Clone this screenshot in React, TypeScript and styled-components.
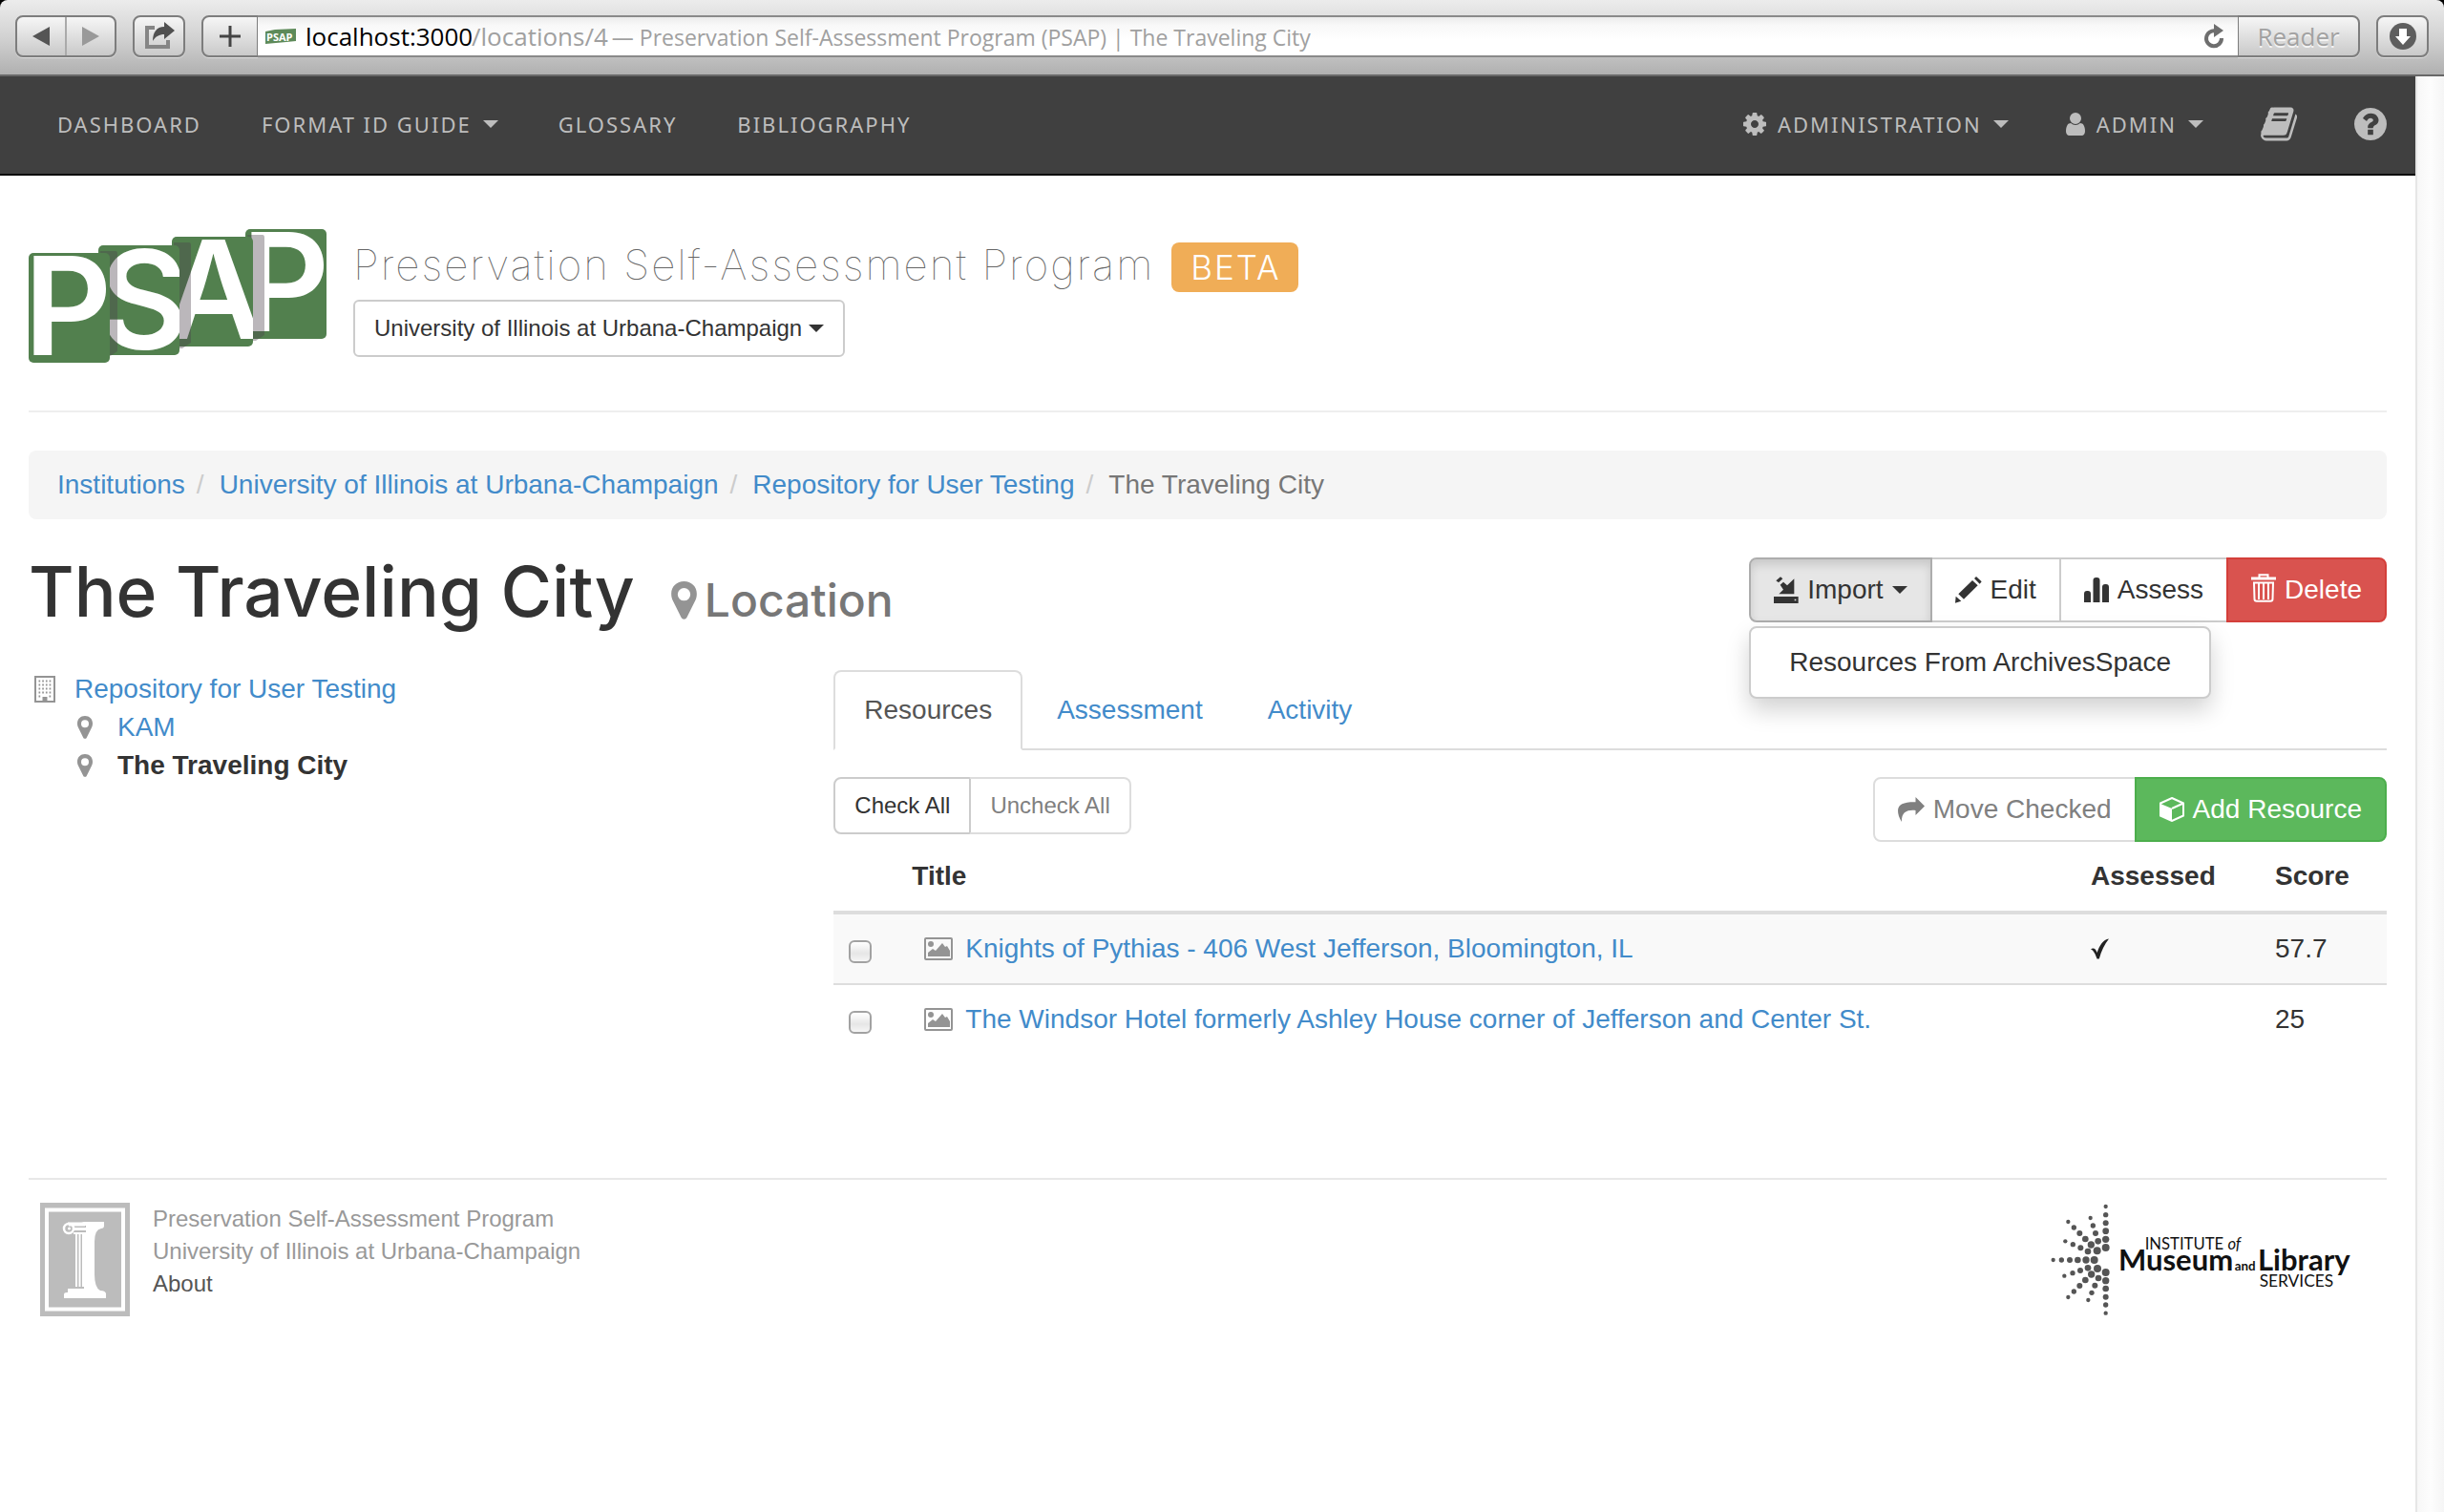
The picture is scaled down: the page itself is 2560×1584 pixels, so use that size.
import React from "react";
import styled, { createGlobalStyle, css } from "styled-components";

const sans = `"Liberation Sans", Arial, Helvetica, sans-serif`;
const display = `Inter, "Open Sans", sans-serif`;
const humanist = `"Open Sans", "Noto Sans", sans-serif`;

const c = {
  link: "#428bca",
  text: "#333",
  muted: "#777",
  icon: "#949494",
  line: "#ddd",
  faint: "#eee",
};

const GlobalStyle = createGlobalStyle`
  *, *::before, *::after { box-sizing: border-box; }
  body { margin: 0; background: #fff; color: ${c.text}; font: 28px/40px ${sans}; }
  button, input, select { font: inherit; color: inherit; margin: 0; }
  a { color: ${c.link}; text-decoration: none; }
  svg { display: block; flex: none; }
`;

const Window = styled.div`
  display: flex;
  flex-direction: column;
  min-height: 100vh;
`;

/* ---------- browser toolbar ---------- */

const ToolbarFrame = styled.div`
  background: #000;
`;

const Toolbar = styled.div`
  display: flex;
  align-items: flex-start;
  height: 80px;
  padding: 16px 16px 0;
  border-bottom: 2px solid #686868;
  border-radius: 8px 8px 0 0;
  background: linear-gradient(#ececec, #d2d2d2 50%, #b0b0b0);
`;

const toolSurface = css`
  height: 44px;
  border: 2px solid #7d7d7d;
  background: linear-gradient(#f6f6f6, #c9c9c9);
  box-shadow: 0 1px 0 #ddd;
`;

const HistoryGroup = styled.div`
  ${toolSurface}
  display: flex;
  width: 106px;
  border-radius: 8px;
`;

const HistoryButton = styled.button<{ $divided?: boolean }>`
  display: flex;
  flex: 1;
  align-items: center;
  justify-content: center;
  padding: 0;
  border: 0;
  border-left: ${(p) => (p.$divided ? "2px solid #aaa" : "0")};
  background: none;
`;

const ToolButton = styled.button`
  ${toolSurface}
  display: flex;
  align-items: center;
  justify-content: center;
  width: 55px;
  padding: 0;
  border-radius: 8px;
  margin-left: 17px;
`;

const AddressBar = styled.div`
  display: flex;
  flex: 1;
  min-width: 0;
  margin-left: 17px;
`;

const AddButton = styled(ToolButton)`
  width: 59px;
  margin: 0;
  border-radius: 8px 0 0 8px;
  border-right-width: 1px;
`;

const AddressField = styled.label`
  display: flex;
  flex: 1;
  min-width: 0;
  align-items: center;
  gap: 10px;
  height: 44px;
  padding: 0 14px 0 8px;
  border: solid #8a8a8a;
  border-width: 2px 0;
  background: linear-gradient(#ececec, #f8f8f8 20%, #fff 60%);
`;

const AddressText = styled.span`
  display: flex;
  flex: 1;
  align-items: baseline;
  min-width: 0;
  white-space: pre;
  font: 26px/36px ${humanist};
  color: #a0a0a0;
`;

const AddressInput = styled.input`
  width: 174px;
  padding: 0;
  border: 0;
  outline: 0;
  background: none;
  color: #000;
`;

const PageTitle = styled.span`
  margin-left: 4px;
  font-size: 23px;
`;

const ReaderButton = styled(ToolButton)`
  width: 128px;
  margin: 0;
  border-left-width: 1px;
  border-radius: 0 8px 8px 0;
  color: #a2a2a2;
  font: 26px/36px ${humanist};
  text-shadow: 0 2px 0 #f4f4f4;
`;

/* ---------- page frame ---------- */

const Viewport = styled.div`
  display: grid;
  grid-template-columns: minmax(0, 1fr) 30px;
  flex: 1;
`;

const ScrollTrack = styled.div`
  border-left: 2px solid #e6e6e6;
  background: linear-gradient(90deg, #f7f7f7, #fdfdfd 50%, #f5f5f5);
`;

const Nav = styled.nav`
  display: flex;
  justify-content: space-between;
  height: 104px;
  padding: 0 0 0 30px;
  border-bottom: 2px solid #080808;
  background: #404040;
`;

const NavList = styled.ul<{ $gap?: number }>`
  display: flex;
  gap: ${(p) => p.$gap ?? 0}px;
  margin: 0;
  padding: 0;
  list-style: none;
`;

const NavLink = styled.a`
  display: flex;
  align-items: center;
  gap: 12px;
  height: 100px;
  padding: 0 30px;
  color: #bdbdbd;
  font: 22px/40px "Noto Sans", "Open Sans", sans-serif;
  letter-spacing: 2px;
  text-transform: uppercase;
`;

const Content = styled.div`
  padding: 0 30px;
`;

const Masthead = styled.header`
  display: flex;
  align-items: flex-end;
  gap: 28px;
  padding: 56px 0 50px;
  border-bottom: 2px solid ${c.faint};
`;

const MastheadText = styled.div`
  display: flex;
  flex-direction: column;
  align-items: flex-start;
  gap: 8px;
  padding-bottom: 6px;
`;

const ProgramName = styled.div`
  display: flex;
  align-items: baseline;
  gap: 18px;
  font: 100 44px/52px ${display};
  letter-spacing: 2px;
  color: #666;
`;

const Beta = styled.span`
  padding: 0 18px 0 20px;
  border-radius: 8px;
  background: #f0ad57;
  color: #fff;
  font: 300 35px/52px ${display};
  letter-spacing: 2px;
`;

const InstitutionPicker = styled.label`
  display: flex;
  align-items: center;
  gap: 6px;
  height: 60px;
  padding: 0 20px;
  border: 2px solid #ccc;
  border-radius: 6px;
`;

const InstitutionSelect = styled.select`
  appearance: none;
  padding: 0;
  border: 0;
  background: none;
  font-size: 24px;
  line-height: 36px;
`;

const Breadcrumb = styled.ol`
  display: flex;
  margin: 40px 0 0;
  padding: 16px 30px;
  border-radius: 8px;
  background: #f5f5f5;
  color: ${c.muted};
  list-style: none;
`;

const Crumb = styled.li`
  & + &::before {
    content: "/";
    padding: 0 16px 0 12px;
    color: #ccc;
  }
`;

const TitleRow = styled.div`
  display: flex;
  align-items: flex-start;
  justify-content: space-between;
  height: 118px;
  margin-top: 40px;
`;

const Title = styled.h1`
  display: flex;
  align-items: baseline;
  gap: 38px;
  margin: 0;
  font: 500 73px/72px ${display};
`;

const Kind = styled.small`
  display: flex;
  align-items: baseline;
  gap: 8px;
  color: ${c.muted};
  font-size: 48px;
`;

const KindPin = styled.span`
  align-self: center;
`;

/* ---------- buttons ---------- */

const ButtonGroup = styled.div`
  display: flex;
`;

type Tone = "default" | "danger" | "success";

const tones = {
  default: css`
    border-color: #ccc;
    background: #fff;
    color: ${c.text};
  `,
  danger: css`
    border-color: #d43f3a;
    background: #d9534f;
    color: #fff;
  `,
  success: css`
    border-color: #4cae4c;
    background: #5cb85c;
    color: #fff;
  `,
};

const Button = styled.button<{ $tone?: Tone; $active?: boolean; $small?: boolean }>`
  display: flex;
  align-items: center;
  gap: 9px;
  padding: ${(p) => (p.$small ? "10px 20px" : "12px 24px")};
  border: 2px solid;
  border-radius: 0;
  font-size: ${(p) => (p.$small ? "24px" : "28px")};
  line-height: ${(p) => (p.$small ? "36px" : "40px")};
  white-space: nowrap;
  ${(p) => tones[p.$tone ?? "default"]}
  ${(p) =>
    p.$active &&
    css`
      position: relative;
      z-index: 1;
      border-color: #adadad;
      background: #e6e6e6;
      box-shadow: inset 0 6px 10px rgba(0, 0, 0, 0.125);
    `}
  &:disabled {
    border-color: ${c.line};
    color: #808080;
  }
  & + & {
    margin-left: ${(p) => (p.$small ? "-1px" : "-2px")};
  }
  & + &:disabled {
    border-left-color: #ccc;
  }
  &:first-child {
    border-radius: 8px 0 0 8px;
  }
  &:last-child {
    border-radius: 0 8px 8px 0;
  }
`;

const ActionArea = styled.div`
  position: relative;
`;

const Menu = styled.ul`
  position: absolute;
  top: 100%;
  left: 0;
  z-index: 10;
  margin: 4px 0 0;
  padding: 10px 0;
  border: 2px solid #ccc;
  border-radius: 8px;
  background: #fff;
  box-shadow: 0 12px 24px rgba(0, 0, 0, 0.175);
  list-style: none;
`;

const MenuLink = styled.a`
  display: block;
  padding: 6px 40px;
  color: ${c.text};
  white-space: nowrap;
`;

/* ---------- body columns ---------- */

const Columns = styled.div`
  display: grid;
  grid-template-columns: minmax(0, 1fr) minmax(0, 2fr);
  margin: 0 -30px;
`;

const Column = styled.section`
  padding: 0 30px;
`;

const Tree = styled.ul<{ $nested?: boolean }>`
  margin: 0;
  padding: 0 0 0 ${(p) => (p.$nested ? "45px" : "6px")};
  list-style: none;
`;

const TreeLabel = styled.div<{ $current?: boolean }>`
  display: grid;
  grid-template-columns: 24px auto;
  gap: 18px;
  align-items: center;
  justify-content: start;
  font-weight: ${(p) => (p.$current ? "bold" : "normal")};
`;

const Tabs = styled.div`
  display: flex;
  gap: 4px;
  border-bottom: 2px solid ${c.line};
`;

const Tab = styled.button<{ $active?: boolean }>`
  margin-bottom: -2px;
  padding: 20px 30px;
  border: 2px solid ${(p) => (p.$active ? c.line : "transparent")};
  border-bottom-color: ${(p) => (p.$active ? "#fff" : "transparent")};
  border-radius: 8px 8px 0 0;
  background: ${(p) => (p.$active ? "#fff" : "none")};
  color: ${(p) => (p.$active ? "#555" : c.link)};
`;

const ListTools = styled.div`
  display: flex;
  align-items: flex-start;
  justify-content: space-between;
  margin-top: 28px;
`;

const Table = styled.table`
  width: 100%;
  border-collapse: collapse;
  table-layout: fixed;
`;

const Th = styled.th<{ $width?: number }>`
  width: ${(p) => (p.$width ? `${p.$width}px` : "auto")};
  padding: 16px;
  border-bottom: 4px solid ${c.line};
  text-align: left;
`;

const Tr = styled.tr`
  &:nth-child(odd) {
    background: #f9f9f9;
  }
  & + & {
    border-top: 2px solid ${c.line};
  }
`;

const Td = styled.td`
  padding: 16px;
`;

const Checkbox = styled.input`
  display: block;
  appearance: none;
  width: 24px;
  height: 24px;
  margin: 6px 0 0;
  border: 2px solid #a2a2a2;
  border-radius: 6px;
  background: linear-gradient(#fff, #e6e6e6 60%, #f6f6f6);
`;

const ResourceLink = styled.a`
  display: flex;
  align-items: center;
  gap: 13px;
  padding-left: 13px;
`;

/* ---------- footer ---------- */

const Footer = styled.footer`
  display: flex;
  align-items: flex-start;
  justify-content: space-between;
  margin-top: 130px;
  padding: 24px 0 24px 12px;
  border-top: 2px solid #e8e8e8;
`;

const Credits = styled.div`
  display: flex;
  align-items: flex-start;
  gap: 24px;
  color: #999;
  font-size: 24px;
  line-height: 34px;
`;

const AboutLink = styled.a`
  color: #555;
`;

/* ---------- icons and logos ---------- */

const Caret = () => (
  <svg width="16" height="8" viewBox="0 0 16 8" fill="currentColor" aria-hidden="true">
    <path d="M0 0h16L8 8z" />
  </svg>
);

const Pin = ({ width = 16, height = 24 }: { width?: number; height?: number }) => (
  <svg width={width} height={height} viewBox="0 0 16 24" fill={c.icon} aria-hidden="true">
    <path
      fillRule="evenodd"
      d="M8 0c4.600 0 8 3.300 8 7.800 0 1.700-.3 2.900-.9 4.200L9.800 22.700c-.7 1.600-2.900 1.600-3.600 0L.9 12C.3 10.700 0 9.500 0 7.800 0 3.300 3.400 0 8 0zm0 4.200a4 4 0 1 0 0 8 4 4 0 0 0 0-8z"
    />
  </svg>
);

const Building = () => (
  <svg width="22" height="28" viewBox="0 0 22 28" aria-hidden="true">
    <rect x="1" y="1" width="20" height="26" fill="#fff" stroke={c.icon} strokeWidth="2" />
    <path
      d="M4.500 5.500h14M4.500 9.500h14M4.500 13.500h14M4.500 17.500h14M4.500 21.500h3M15.500 21.500h3"
      stroke={c.icon}
      strokeWidth="2"
      strokeDasharray="1.700 2"
    />
    <path d="M8.500 22h5v5h-5z" fill={c.icon} />
  </svg>
);

const Gear = () => (
  <svg width="24" height="24" viewBox="128 128 1536 1536" fill="currentColor" aria-hidden="true">
    <path d="M1152 896q0-106-75-181t-181-75-181 75-75 181 75 181 181 75 181-75 75-181zm512-109v222q0 12-8 23t-20 13l-185 28q-19 54-39 91 35 50 107 138 10 12 10 25t-9 23q-27 37-99 108t-94 71q-12 0-26-9l-138-108q-44 23-91 38-16 136-29 186-7 28-36 28h-222q-14 0-24.500-8.500t-11.500-21.500l-28-184q-49-16-90-37l-141 107q-10 9-25 9-14 0-25-11-126-114-165-168-7-10-7-23 0-12 8-23 15-21 51-66.500t54-70.500q-27-50-41-99l-183-27q-13-2-21-12.500t-8-23.500v-222q0-12 8-23t19-13l186-28q14-46 39-92-40-57-107-138-10-12-10-24 0-10 9-23 26-36 98.500-107.500t94.500-71.500q13 0 26 10l138 107q44-23 91-38 16-136 29-186 7-28 36-28h222q14 0 24.500 8.500t11.500 21.500l28 184q49 16 90 37l142-107q9-9 24-9 13 0 25 10 129 119 165 170 7 8 7 22 0 12-8 23-15 21-51 66.500t-54 70.500q26 50 41 98l183 28q13 2 21 12.500t8 23.500z" />
  </svg>
);

const User = () => (
  <svg width="20" height="24" viewBox="256 128 1280 1536" fill="currentColor" aria-hidden="true">
    <path d="M1536 1399q0 109-62.500 187t-150.500 78h-854q-88 0-150.500-78t-62.500-187q0-85 8.500-160.500t31.500-152 58.500-131 94-89 134.500-34.500q131 128 313 128t313-128q76 0 134.500 34.500t94 89 58.500 131 31.500 152 8.500 160.500zm-256-887q0 159-112.500 271.500t-271.500 112.500-271.500-112.500-112.500-271.500 112.500-271.500 271.500-112.500 271.500 112.500 112.500 271.500z" />
  </svg>
);

const Book = () => (
  <svg width="38" height="36" viewBox="60 128 1664 1536" fill="currentColor" aria-hidden="true">
    <path d="M1703 478q40 57 18 129l-275 906q-19 64-76.500 107.500t-122.500 43.500h-923q-77 0-148.500-53.500t-99.500-131.500q-24-67-2-127 0-4 3-27t4-37q1-8-3-21.500t-3-19.500q2-11 8-21t16.500-23.500 16.500-23.500q23-38 45-91.500t30-91.500q3-10 .5-30t-.5-28q3-11 17-28t17-23q21-36 42-92t25-90q1-9-2.500-32t.5-28q4-13 22-30.500t22-22.500q19-26 42.500-84.500t27.500-96.500q1-8-3-25.500t-2-26.500q2-8 9-18t18-23 17-21q8-12 16.500-30.500t15-35 16-36 19.500-32 26.500-23.500 36-11.500 47.500 5.500l-1 3q38-9 51-9h761q74 0 114 56t18 130l-274 906q-36 119-71.500 153.500t-128.500 34.500h-869q-27 0-38 15-11 16-1 43 24 70 144 70h923q29 0 56-15.500t35-41.500l300-987q7-22 5-57 38 15 59 43zm-1064 2q-4 13 2 22.500t20 9.500h608q13 0 25.500-9.500t16.500-22.500l21-64q4-13-2-22.500t-20-9.500h-608q-13 0-25.500 9.500t-16.500 22.500zm-83 256q-4 13 2 22.500t20 9.500h608q13 0 25.500-9.500t16.500-22.500l21-64q4-13-2-22.500t-20-9.500h-608q-13 0-25.500 9.500t-16.500 22.500z" />
  </svg>
);

const Help = () => (
  <svg width="34" height="34" viewBox="128 128 1536 1536" fill="currentColor" aria-hidden="true">
    <path d="M1024 1376v-192q0-14-9-23t-23-9h-192q-14 0-23 9t-9 23v192q0 14 9 23t23 9h192q14 0 23-9t9-23zm256-672q0-88-55.500-163t-138.500-116-170-41q-243 0-371 213-15 24 8 42l132 100q7 6 19 6 16 0 25-12 53-68 86-92 34-24 86-24 48 0 85.500 26t37.500 59q0 38-20 61t-68 45q-63 28-115.500 86.500t-52.500 125.500v36q0 14 9 23t23 9h192q14 0 23-9t9-23q0-19 21.500-49.500t54.500-49.500q32-18 49-28.500t46-35 44.500-48 28-60.500 12.500-81zm384 192q0 209-103 385.500t-279.500 279.500-385.500 103-385.500-103-279.500-279.500-103-385.500 103-385.500 279.500-279.500 385.500-103 385.500 103 279.500 279.500 103 385.500z" />
  </svg>
);

const ImportIcon = () => (
  <svg width="26" height="28" viewBox="54 36 78 84" fill="currentColor" aria-hidden="true">
    <path fillRule="evenodd" d="M54 99h77v21H54zM119 107v5h5v-5z" />
    <path d="M118 43v48H70l14-14-10-15 10-9 12 11z" />
    <path d="M61 49l14-12 7 6-13 12z" />
  </svg>
);

const Pencil = () => (
  <svg width="28" height="28" viewBox="624 36 84 84" fill="currentColor" aria-hidden="true">
    <path d="M624 119l2-21 17 15zM634 91l44-43 17 16-44 43zM684 42l6-6 17 16-6 7z" />
  </svg>
);

const Bars = () => (
  <svg width="26" height="26" viewBox="0 0 26 26" fill="currentColor" aria-hidden="true">
    <path d="M0 26V17q0-3 3-3h1q3 0 3 3v9zM9.500 26V3q0-3 3-3h1q3 0 3 3v23zM19 26V10q0-3 3-3h1q3 0 3 3v16z" />
  </svg>
);

const Trash = () => (
  <svg width="26" height="34" viewBox="0 0 26 34" fill="none" stroke="currentColor" aria-hidden="true">
    <path d="M0 5h26" strokeWidth="3" />
    <path d="M8.500 4V1.200h9V4" strokeWidth="2" />
    <path d="M3 9.500h20l-.5 17q0 2.300-2.300 2.300H5.800q-2.300 0-2.300-2.300z" strokeWidth="2" />
    <path d="M8 10v17M13 10v17M18 10v17" strokeWidth="2" />
  </svg>
);

const MoveArrow = () => (
  <svg width="28" height="26" viewBox="0 0 28 26" fill="currentColor" aria-hidden="true">
    <path d="M18.500 0L28 9.500 18.500 19v-5C10 13.200 3.500 15.500 4 26 1 21.500 0 17.500 0 14 .3 7.500 6 5 18.500 5.200z" />
  </svg>
);

const Cube = () => (
  <svg width="26" height="26" viewBox="0 0 26 26" aria-hidden="true">
    <path d="M13 1l12 5.500v13L13 25 1 19.500v-13z" fill="none" stroke="currentColor" strokeWidth="2" />
    <path d="M1 7l12 5v13L1 19.500z" fill="currentColor" />
    <path d="M13 12l12-5.500" stroke="currentColor" strokeWidth="2" />
  </svg>
);

const Picture = () => (
  <svg width="30" height="24" viewBox="0 0 30 24" aria-hidden="true">
    <rect x="1" y="1" width="28" height="22" rx="1" fill="none" stroke={c.icon} strokeWidth="2" />
    <circle cx="7" cy="7" r="3" fill={c.icon} />
    <path d="M4 20v-4l5-4 3 2 7-8 3 4 2-1 3 5v6z" fill={c.icon} />
  </svg>
);

const CheckMark = () => (
  <svg width="20" height="22" viewBox="0 0 20 22" fill="#222" role="img" aria-label="Yes">
    <path d="M0 11.500C2.500 9.500 5 10.500 6.600 15 9 8 13 1 19 0.500 14.500 6 11 13 8.800 21.500H6.500C5 17 3 12.500 0 11.500z" />
  </svg>
);

const tiles = [
  { letter: "P", x: 227, y: 0, textX: 223, baseline: 107 },
  { letter: "A", x: 150, y: 8, textX: 142, baseline: 115 },
  { letter: "S", x: 73, y: 17, textX: 74, baseline: 125 },
  { letter: "P", x: 0, y: 25, textX: -5, baseline: 132 },
];

const PsapLogo = () => (
  <svg width="312" height="140" viewBox="0 0 312 140" role="img" aria-label="PSAP">
    {tiles.map((t, i) => (
      <g key={i}>
        <clipPath id={`tile-${i}`}>
          <rect x={t.x} y={t.y} width="85" height="115" rx="5" />
        </clipPath>
        <rect x={t.x} y={t.y} width="85" height="115" rx="5" fill="#52804e" />
        <text
          x={t.textX}
          y={t.baseline}
          clipPath={`url(#tile-${i})`}
          fill="#fff"
          fontFamily="Inter, sans-serif"
          fontSize="143"
          fontWeight="600"
        >
          {t.letter}
        </text>
        {i < 3 && (
          <path
            d={`M${t.x + 2} ${t.y + 6}h16q2 0 2 3v102l-9 6h-9z`}
            fill="#4b434b"
            fillOpacity=".38"
          />
        )}
      </g>
    ))}
  </svg>
);

const Favicon = () => (
  <svg width="32" height="16" viewBox="0 0 32 16" aria-hidden="true">
    <path d="M0 3l10-2 22-1v13l-10 1-22 2z" fill="#5d8a59" />
    <text x="1" y="13" fill="#fff" fontFamily="Open Sans, sans-serif" fontSize="11" fontWeight="700">
      PSAP
    </text>
  </svg>
);

const IllinoisLogo = () => (
  <svg width="94" height="119" viewBox="0 0 94 119" role="img" aria-label="University of Illinois">
    <path d="M0 0h94v119H0z" fill="#bcbcbc" />
    <rect x="7" y="7.500" width="80" height="104" fill="none" stroke="#fff" strokeWidth="4" />
    <path
      d="M46 20h21v4q0 3-3 3-7 1-7 14v34q0 14 6 17 5 0 6 3v5H25v-4q0-2 3-2h18V33H35v-2h13v-2H35v-3h13v-2H35z"
      fill="#fff"
    />
    <path d="M38 33v55M41.500 33v55M45 33v55" stroke="#fff" strokeWidth="2" />
    <path d="M29 90h19v4H29z" fill="#fff" />
    <circle cx="30" cy="27" r="5" fill="none" stroke="#fff" strokeWidth="2.500" />
    <circle cx="30.500" cy="27" r="1.500" fill="#fff" />
    <path d="M29 20.500h18v4H30z" fill="#fff" />
  </svg>
);

const rays = [
  [221, 240, 195, 240, 169, 240, 144, 240, 118, 240, 92, 240],
  [257, 201, 257, 175, 257, 149, 257, 124, 257, 98, 257, 72],
  [257, 279, 257, 305, 257, 330, 257, 356, 257, 381, 257, 407],
  [230, 211, 211, 192, 193, 174, 175, 156, 157, 138, 139, 120],
  [231, 267, 212, 285, 193, 303, 175, 321, 157, 339, 139, 357],
  [0, 0, 0, 0, 201, 213, 178, 202, 154, 191, 130, 181],
  [0, 0, 0, 0, 201, 265, 177, 273, 153, 281, 127, 290],
  [0, 0, 0, 0, 233, 181, 225, 156, 217, 132, 209, 108],
  [0, 0, 0, 0, 234, 297, 223, 320, 213, 343, 202, 366],
];

const radii = [12, 11, 10, 9, 8, 6.5];

const ImlsLogo = () => (
  <svg
    width="380"
    height="120"
    viewBox="0 60 1140 360"
    role="img"
    aria-label="Institute of Museum and Library Services"
    fontFamily="Lato, sans-serif"
    fill="#111"
  >
    <g fill="#555">
      {rays.flatMap((ray, i) =>
        radii.map((r, j) =>
          ray[j * 2] ? <circle key={`${i}-${j}`} cx={ray[j * 2]} cy={ray[j * 2 + 1]} r={r} /> : null,
        ),
      )}
    </g>
    <text x="380" y="208" fontSize="50">
      INSTITUTE <tspan fontStyle="italic">of</tspan>
    </text>
    <text x="297" y="273" fontSize="93" fontWeight="700">
      Museum
    </text>
    <text x="662" y="273" fontSize="40" fontWeight="700">
      and
    </text>
    <text x="735" y="273" fontSize="93" fontWeight="700">
      Library
    </text>
    <text x="740" y="324" fontSize="52">
      SERVICES
    </text>
  </svg>
);

/* ---------- page ---------- */

const resources = [
  { id: 1, title: "Knights of Pythias - 406 West Jefferson, Bloomington, IL", assessed: true, score: "57.7" },
  {
    id: 2,
    title: "The Windsor Hotel formerly Ashley House corner of Jefferson and Center St.",
    assessed: false,
    score: "25",
  },
];

export default function App() {
  return (
    <Window>
      <GlobalStyle />
      <ToolbarFrame>
        <Toolbar>
          <HistoryGroup>
            <HistoryButton aria-label="Back">
              <svg width="18" height="20" viewBox="0 0 18 20" fill="#555">
                <path d="M18 0v20L0 10z" />
              </svg>
            </HistoryButton>
            <HistoryButton aria-label="Forward" $divided>
              <svg width="18" height="20" viewBox="0 0 18 20" fill="#999">
                <path d="M0 0v20l18-10z" />
              </svg>
            </HistoryButton>
          </HistoryGroup>
          <ToolButton aria-label="Share">
            <svg width="34" height="30" viewBox="0 0 34 30">
              <path d="M12 6H4v20h22v-7" fill="none" stroke="#868686" strokeWidth="4" />
              <path d="M22 0l11 9-11 9v-5c-5 0-9 2-12 7C10 11 14 5 22 5z" fill="#505050" />
            </svg>
          </ToolButton>
          <AddressBar>
            <AddButton aria-label="Add bookmark">
              <svg width="22" height="22" viewBox="0 0 22 22" stroke="#444" strokeWidth="3">
                <path d="M11 0v22M0 11h22" />
              </svg>
            </AddButton>
            <AddressField>
              <Favicon />
              <AddressText>
                <AddressInput aria-label="Address" defaultValue="localhost:3000" />
                /locations/4
                <PageTitle>— Preservation Self-Assessment Program (PSAP) | The Traveling City</PageTitle>
              </AddressText>
              <svg width="22" height="26" viewBox="0 0 22 26">
                <path d="M13 7.500A8 8 0 1 0 19 15" fill="none" stroke="#6e6e6e" strokeWidth="4" />
                <path d="M11 0l10 7-10 7z" fill="#6e6e6e" />
              </svg>
            </AddressField>
            <ReaderButton>Reader</ReaderButton>
          </AddressBar>
          <ToolButton aria-label="Downloads">
            <svg width="28" height="28" viewBox="0 0 28 28">
              <circle cx="14" cy="14" r="14" fill="#5e5e5e" />
              <path d="M10 6h8v8h4l-8 9-8-9h4z" fill="#fff" />
            </svg>
          </ToolButton>
        </Toolbar>
      </ToolbarFrame>

      <Viewport>
        <div>
          <Nav>
            <NavList $gap={3}>
              <li><NavLink href="#">Dashboard</NavLink></li>
              <li><NavLink href="#">Format ID Guide <Caret /></NavLink></li>
              <li><NavLink href="#">Glossary</NavLink></li>
              <li><NavLink href="#">Bibliography</NavLink></li>
            </NavList>
            <NavList>
              <li><NavLink href="#"><Gear />Administration <Caret /></NavLink></li>
              <li><NavLink href="#"><User />Admin <Caret /></NavLink></li>
              <li><NavLink href="#" aria-label="Guide"><Book /></NavLink></li>
              <li><NavLink href="#" aria-label="Help"><Help /></NavLink></li>
            </NavList>
          </Nav>

          <Content>
            <Masthead>
              <PsapLogo />
              <MastheadText>
                <ProgramName>
                  Preservation Self-Assessment Program
                  <Beta>BETA</Beta>
                </ProgramName>
                <InstitutionPicker>
                  <InstitutionSelect aria-label="Institution">
                    <option>University of Illinois at Urbana-Champaign</option>
                  </InstitutionSelect>
                  <Caret />
                </InstitutionPicker>
              </MastheadText>
            </Masthead>

            <Breadcrumb>
              <Crumb><a href="#">Institutions</a></Crumb>
              <Crumb><a href="#">University of Illinois at Urbana-Champaign</a></Crumb>
              <Crumb><a href="#">Repository for User Testing</a></Crumb>
              <Crumb>The Traveling City</Crumb>
            </Breadcrumb>

            <TitleRow>
              <Title>
                The Traveling City
                <Kind>
                  <KindPin><Pin width={27} height={40} /></KindPin>
                  Location
                </Kind>
              </Title>
              <ActionArea>
                <ButtonGroup>
                  <Button $active aria-haspopup="menu" aria-expanded="true"><ImportIcon />Import <Caret /></Button>
                  <Button><Pencil />Edit</Button>
                  <Button><Bars />Assess</Button>
                  <Button $tone="danger"><Trash />Delete</Button>
                </ButtonGroup>
                <Menu>
                  <li><MenuLink href="#">Resources From ArchivesSpace</MenuLink></li>
                </Menu>
              </ActionArea>
            </TitleRow>

            <Columns>
              <Column>
                <Tree>
                  <li>
                    <TreeLabel><Building /><a href="#">Repository for User Testing</a></TreeLabel>
                    <Tree $nested>
                      <li><TreeLabel><Pin /><a href="#">KAM</a></TreeLabel></li>
                      <li><TreeLabel $current><Pin />The Traveling City</TreeLabel></li>
                    </Tree>
                  </li>
                </Tree>
              </Column>

              <Column>
                <Tabs role="tablist">
                  <Tab role="tab" aria-selected="true" $active>Resources</Tab>
                  <Tab role="tab">Assessment</Tab>
                  <Tab role="tab">Activity</Tab>
                </Tabs>
                <ListTools>
                  <ButtonGroup>
                    <Button $small>Check All</Button>
                    <Button $small disabled>Uncheck All</Button>
                  </ButtonGroup>
                  <ButtonGroup>
                    <Button disabled><MoveArrow />Move Checked</Button>
                    <Button $tone="success"><Cube />Add Resource</Button>
                  </ButtonGroup>
                </ListTools>
                <Table>
                  <thead>
                    <tr>
                      <Th $width={66} aria-label="Select" />
                      <Th>Title</Th>
                      <Th $width={193}>Assessed</Th>
                      <Th $width={133}>Score</Th>
                    </tr>
                  </thead>
                  <tbody>
                    {resources.map((r) => (
                      <Tr key={r.id}>
                        <Td><Checkbox type="checkbox" aria-label={`Select ${r.title}`} /></Td>
                        <Td><ResourceLink href="#"><Picture />{r.title}</ResourceLink></Td>
                        <Td>{r.assessed && <CheckMark />}</Td>
                        <Td>{r.score}</Td>
                      </Tr>
                    ))}
                  </tbody>
                </Table>
              </Column>
            </Columns>

            <Footer>
              <Credits>
                <IllinoisLogo />
                <div>
                  Preservation Self-Assessment Program
                  <br />
                  University of Illinois at Urbana-Champaign
                  <br />
                  <AboutLink href="#">About</AboutLink>
                </div>
              </Credits>
              <ImlsLogo />
            </Footer>
          </Content>
        </div>
        <ScrollTrack />
      </Viewport>
    </Window>
  );
}
